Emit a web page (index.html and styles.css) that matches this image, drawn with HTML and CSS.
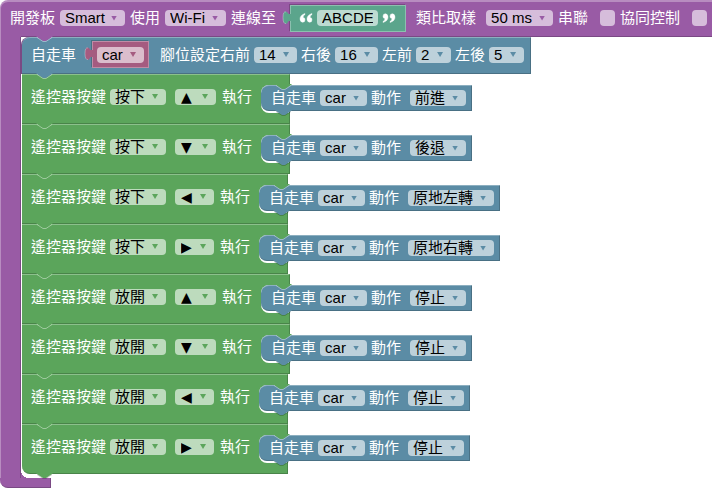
FILE: index.html
```
<!DOCTYPE html>
<html lang="zh-Hant">
<head>
<meta charset="utf-8">
<title>自走車</title>
<link rel="stylesheet" href="styles.css">
</head>
<body>
<main class="workspace" id="workspace">
  <section class="board">
    <header class="block board-head">
      <label for="board">開發板</label>
      <span class="pick w-smart"><select id="board"><option>Smart</option></select></span>
      <label for="link">使用</label>
      <span class="pick w-wifi"><select id="link"><option>Wi-Fi</option></select></span>
      <label for="device">連線至</label>
      <span class="value value-text">
        <svg class="plug" width="9" height="15" viewBox="0 0 9 15" aria-hidden="true"><path class="plug-fill" d="M9 4H7Q6 4 5 2Q1 0 1 7.500Q1 15 5 13.500Q6 11 7 11H9z"/><path class="plug-line" d="M4 13.500Q1 14 1 7.500Q1 1 4 2"/></svg>
        <svg class="quote" width="12" height="10" viewBox="0 0 12 9" aria-hidden="true"><path d="M5 0v1Q3 2 3 4q2 0 2 2.300q0 2.500-2.300 2.500Q0 8.500 0 5.500Q0 1.500 5 0zM12 0v1q-2 1-2 3q2 0 2 2.300q0 2.500-2.300 2.500Q7 8.500 7 5.500Q7 1.500 12 0z"/></svg>
        <input id="device" type="text" value="ABCDE">
        <svg class="quote" width="12" height="10" viewBox="0 0 12 9" aria-hidden="true"><path transform="rotate(180 6 4.500)" d="M5 0v1Q3 2 3 4q2 0 2 2.300q0 2.500-2.300 2.500Q0 8.500 0 5.500Q0 1.500 5 0zM12 0v1q-2 1-2 3q2 0 2 2.300q0 2.500-2.300 2.500Q7 8.500 7 5.500Q7 1.500 12 0z"/></svg>
      </span>
      <label for="sample" class="far">類比取樣</label>
      <span class="pick w-sample far"><select id="sample"><option>50 ms</option></select></span>
      <label for="serial">串聯</label>
      <input class="tick" id="serial" type="checkbox">
      <label for="together">協同控制</label>
      <input class="tick" id="together" type="checkbox">
    </header>
    <div class="stack" id="stack">
      <div class="block setup">
        <svg class="notch from-board" width="17" height="6" viewBox="0 0 17 6" aria-hidden="true"><path d="M0 0l1 1l6 4h3l6-4l1-1z"/><path class="notch-line" d="M1 1.500l6 4h3l6-4"/></svg>
        <label for="car-name">自走車</label>
        <span class="value value-car">
          <svg class="plug" width="9" height="15" viewBox="0 0 9 15" aria-hidden="true"><path class="plug-fill" d="M9 4H7Q6 4 5 2Q1 0 1 7.500Q1 15 5 13.500Q6 11 7 11H9z"/><path class="plug-line" d="M4 13.500Q1 14 1 7.500Q1 1 4 2"/></svg>
          <span class="pick w-car"><select id="car-name"><option>car</option></select></span>
        </span>
        <label for="pin-rf" class="far">腳位設定右前</label>
        <span class="pick w-pin2"><select id="pin-rf"><option>14</option></select></span>
        <label for="pin-rb">右後</label>
        <span class="pick w-pin2"><select id="pin-rb"><option>16</option></select></span>
        <label for="pin-lf">左前</label>
        <span class="pick w-pin1"><select id="pin-lf"><option>2</option></select></span>
        <label for="pin-lb">左後</label>
        <span class="pick w-pin1"><select id="pin-lb"><option>5</option></select></span>
      </div>
    </div>
    <div class="board-foot"></div>
  </section>
</main>
<script src="blocks.js"></script>
</body>
</html>
```
FILE: blocks.js
```
const rules = [
  ["按下", "▲", "前進"],
  ["按下", "▼", "後退"],
  ["按下", "◀", "原地左轉"],
  ["按下", "▶", "原地右轉"],
  ["放開", "▲", "停止"],
  ["放開", "▼", "停止"],
  ["放開", "◀", "停止"],
  ["放開", "▶", "停止"],
];
const states = ["按下", "放開"];
const keys = ["▲", "▼", "◀", "▶"];
const moves = ["前進", "後退", "原地左轉", "原地右轉", "停止"];

const options = (all, chosen) =>
  all.map((o) => `<option${o === chosen ? " selected" : ""}>${o}</option>`).join("");

const notch = (cls) =>
  `<svg class="notch ${cls}" width="17" height="6" viewBox="0 0 17 6" aria-hidden="true"><path d="M0 0l1 1l6 4h3l6-4l1-1z"/><path class="notch-line" d="M1 1.500l6 4h3l6-4"/></svg>`;

const stack = document.getElementById("stack");
rules.forEach(([state, key, move], i) => {
  const side = key === "◀" || key === "▶";
  const row = document.createElement("div");
  row.className = "block rule";
  row.innerHTML = `
    ${notch(i ? "from-rule" : "from-setup")}
    <label for="state-${i}">遙控器按鍵</label>
    <span class="pick w-state"><select id="state-${i}">${options(states, state)}</select></span>
    <span class="pick far ${side ? "w-side" : "w-key"}"><select class="key" id="key-${i}" aria-label="按鍵">${options(keys, key)}</select></span>
    <label class="run" for="key-${i}">執行</label>
    <div class="well">
      <div class="block action">
        ${notch("from-rule")}
        <label for="car-${i}">自走車</label>
        <span class="pick w-car"><select id="car-${i}"><option>car</option></select></span>
        <label for="move-${i}">動作</label>
        <span class="pick far ${move.length > 2 ? "w-turn" : "w-state"}"><select id="move-${i}">${options(moves, move)}</select></span>
        ${notch("below from-setup")}
      </div>
    </div>`;
  stack.append(row);
});
stack.lastElementChild.insertAdjacentHTML("beforeend", notch("below from-rule"));
```
FILE: styles.css
```
* { box-sizing: border-box; }

body {
  margin: 0;
  background: #fff;
  color: #fff;
  font: 15px/16px "Liberation Sans", "Noto Sans CJK TC", sans-serif;
}

.workspace { overflow: hidden; }

.board { --hue: #995ba5; }

.block {
  position: relative;
  display: flex;
  align-items: center;
  gap: 4px;
  width: max-content;
  background: var(--hue);
  white-space: nowrap;
}

.board-head {
  gap: 5px;
  height: 37px;
  width: 100%;
  min-width: max-content;
  padding: 0 5px 3px 9px;
  border-top: 2px solid #b88cc0;
  border-left: 1px solid #b88cc0;
  border-right: 1px solid #7a4984;
  border-top-left-radius: 8px;
  background: linear-gradient(to right, #995ba5 20px, #7a4984 20px) bottom / 100% 1px no-repeat #995ba5;
}

/* the rail of the board block, with its rounded inner corner at the bottom */
.stack {
  padding: 0 0 4px 22px;
  background:
    radial-gradient(circle at 8px 0, transparent 8px, #995ba5 8px) 21px 100% / 8px 8px no-repeat,
    linear-gradient(to right, #b88cc0 1px, #995ba5 1px 20px, #7a4984 20px 21px, transparent 21px);
}

.setup {
  --hue: #5b8ca5;
  height: 37px;
  padding: 0 6px 2px 9px;
  border-top: 1px solid #8cafc0;
  border-right: 1px solid #497084;
  border-bottom: 1px solid #497084;
  border-top-left-radius: 8px;
  box-shadow: -1px 0 #7a4984;
}

.rule {
  --hue: #5ba55b;
  height: 50px;
  padding: 0 0 5px 9px;
  border-top: 1px solid #8cc08c;
  border-right: 1px solid #498449;
  border-bottom: 1px solid #498449;
}

.rule:last-child { border-bottom-left-radius: 8px; }

.board-foot {
  width: 51px;
  height: 10px;
  background: #995ba5;
  border-bottom: 1px solid #7a4984;
  border-right: 1px solid #7a4984;
  border-bottom-left-radius: 8px;
}

.run { margin-left: 2px; }

.well {
  align-self: flex-start;
  width: 28px;
  height: 28px;
  margin: 10px 0 0 5px;
  background: #fff;
  border-radius: 8px 0 0 8px;
}

.action {
  --hue: #5b8ca5;
  z-index: 1;
  height: 26px;
  padding: 0 5px 0 10px;
  border-top: 1px solid #8cafc0;
  border-right: 1px solid #497084;
  border-bottom: 1px solid #497084;
  border-radius: 8px 0 0 8px;
}

.far { margin-left: 5px; }
.setup .far { margin-left: 7px; }

.pick {
  --w: 40px;
  display: grid;
  align-items: center;
  width: var(--w);
}

.pick::after {
  content: "";
  grid-area: 1 / 1;
  justify-self: end;
  width: 6px;
  height: 5px;
  margin-right: 8px;
  background: var(--hue);
  clip-path: polygon(0 0, 100% 0, 50% 100%);
  pointer-events: none;
}

select,
input[type="text"] {
  grid-area: 1 / 1;
  width: 100%;
  height: 16px;
  margin: 0;
  padding: 0 5px;
  border: 0;
  border-radius: 4px;
  appearance: none;
  background: rgb(255 255 255 / 60%);
  color: #000;
  font: inherit;
}

select.key {
  padding-left: 6px;
  font-family: "DejaVu Sans", sans-serif;
  font-size: 14px;
}

.w-smart { --w: 65px; }
.w-wifi { --w: 61px; }
.w-sample { --w: 67px; }
.w-car { --w: 47px; }
.w-pin2 { --w: 43px; }
.w-pin1 { --w: 35px; }
.w-state { --w: 56px; }
.w-turn { --w: 86px; }
.w-key { --w: 41px; }
.w-side { --w: 39px; }

.tick {
  width: 15px;
  height: 16px;
  margin: 0 0 0 7px;
  appearance: none;
  border-radius: 4px;
  background: rgb(255 255 255 / 60%);
}

.tick:checked { background: #fff; }

.value {
  position: relative;
  display: flex;
  align-items: center;
  gap: 5px;
  height: 27px;
  margin-left: 12px;
  background: var(--hue);
  box-shadow: -1px -1px rgb(0 0 0 / 20%);
}

.value-text {
  --hue: #5ba58c;
  margin-left: 9px;
  padding: 0 10px 0 9px;
  border: 1px solid #8cc0af;
}

.value-text input { width: 61px; }

.value-car {
  --hue: #a55b80;
  padding: 0 4px;
  border: 1px solid #c08ca6;
}

.plug {
  position: absolute;
  left: -9px;
  top: 4px;
}

.plug-fill { fill: var(--hue); }
.plug-line { fill: none; stroke: #fff; stroke-opacity: .3; }

.quote { fill: #fff; stroke: #fff; stroke-width: .4; overflow: visible; }

.notch {
  position: absolute;
  left: 14px;
  top: -2px;
  z-index: 1;
}

.notch-line { fill: none; stroke: rgb(255 255 255 / 40%); }
.below { top: auto; bottom: -6px; }
.below .notch-line { stroke: rgb(0 0 0 / 20%); }
.from-board { fill: #995ba5; }
.from-setup { fill: #5b8ca5; }
.from-rule { fill: #5ba55b; }
```
